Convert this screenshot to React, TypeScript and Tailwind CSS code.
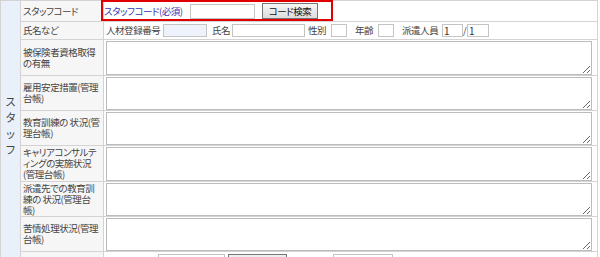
import React from "react";

const jp = "font-['Noto_Sans_CJK_JP','Noto_Sans',sans-serif] [font-feature-settings:'palt']";

const memoRows = [
  { label: ["被保険者資格取得", "の有無"], tr: "h-[36px]", ta: "h-[34px]" },
  { label: ["雇用安定措置(管理", "台帳)"], tr: "h-[35px]", ta: "h-[33px]" },
  { label: ["教育訓練の 状況(管", "理台帳)"], tr: "h-[35px]", ta: "h-[33px]" },
  { label: ["キャリアコンサルテ", "ィングの実施状況", "(管理台帳)"], tr: "h-[36px]", ta: "h-[34px]" },
  { label: ["派遣先での教育訓", "練の 状況(管理台", "帳)"], tr: "h-[35px]", ta: "h-[33px]" },
  { label: ["苦情処理状況(管理", "台帳)"], tr: "h-[35px]", ta: "h-[33px]" },
];

const cell = "border border-[#d3d3d3]";
const head = "border border-[#d3d3d3] bg-[#f6f6f6] px-[2px] whitespace-nowrap overflow-hidden";
const field = "block h-[13px] border border-[#c4c4c4] px-[1px] text-[10px] leading-[11px] text-[#333] outline-none";

export default function App() {
  return (
    <div className={`relative w-[600px] h-[257px] overflow-hidden bg-white text-[#444] tracking-[-0.45px] ${jp}`}>
      <table className="table-fixed border-collapse w-[598px] text-[9.5px] leading-[11px]">
        <colgroup>
          <col className="w-[20px]" />
          <col className="w-[83px]" />
          <col />
        </colgroup>
        <tbody>
          <tr className="h-[21px]">
            <td rowSpan={9} className={`${cell} bg-[#eaf0f9] align-top`}>
              <div className="pt-[92px] text-center text-[11px] leading-[16px] tracking-normal">
                ス<br />タ<br />ッ<br />フ
              </div>
            </td>
            <td className={head}>スタッフコード</td>
            <td className={`${cell} px-0`}>
              <div className="flex items-center">
                <span className="w-[86px] whitespace-nowrap text-[#3535b0]">スタッフコード(必須)</span>
                <input className={`${field} w-[65px] h-[15px] bg-white`} />
                <button className="ml-[7px] h-[16px] w-[56px] border border-[#767676] bg-gradient-to-b from-[#f6f6f6] to-[#dddddd] text-[9.5px] leading-[13px] text-[#111]">
                  コード検索
                </button>
              </div>
            </td>
          </tr>
          <tr className="h-[18px]">
            <td className={head}>氏名など</td>
            <td className={`${cell} pl-[2px]`}>
              <div className="flex items-center whitespace-nowrap">
                <span className="w-[57px]">人材登録番号</span>
                <input className={`${field} w-[44px] bg-[#eef2fa]`} />
                <span className="w-[25px] pl-[5px]">氏名</span>
                <input className={`${field} w-[73px] bg-white`} />
                <span className="w-[26px] pl-[3px]">性別</span>
                <input className={`${field} w-[16px] bg-white`} />
                <span className="w-[31px] pl-[8px]">年齢</span>
                <input className={`${field} w-[16px] bg-white`} />
                <span className="w-[48px] pl-[8px]">派遣人員</span>
                <input className={`${field} w-[21px] bg-white`} defaultValue="1" />
                <span className="w-[4px]">/</span>
                <input className={`${field} w-[22px] bg-white`} defaultValue="1" />
              </div>
            </td>
          </tr>
          {memoRows.map((r) => (
            <tr key={r.label.join("")} className={r.tr}>
              <td className={head}>
                {r.label.map((l) => (
                  <div key={l}>{l}</div>
                ))}
              </td>
              <td className={`${cell} pl-[2px] pt-px pb-0 align-top`}>
                <textarea className={`block w-[486px] ${r.ta} border border-[#bcbcbc] bg-white outline-none`} />
              </td>
            </tr>
          ))}
          <tr className="h-[30px]">
            <td className={head}>&nbsp;</td>
            <td className={`${cell} pl-[2px] align-top pt-[2px]`}>
              <div className="flex items-start">
                <input className={`${field} ml-[52px] w-[67px] h-[16px] bg-white`} />
                <button className="ml-[3px] h-[18px] w-[59px] border border-[#767676] bg-[#eeeeee]" />
                <input className={`${field} ml-[46px] w-[60px] h-[16px] bg-white`} />
              </div>
            </td>
          </tr>
        </tbody>
      </table>
      <div className="absolute left-[101px] top-0 w-[232px] h-[21px] border-2 border-[#e00000]" />
    </div>
  );
}
